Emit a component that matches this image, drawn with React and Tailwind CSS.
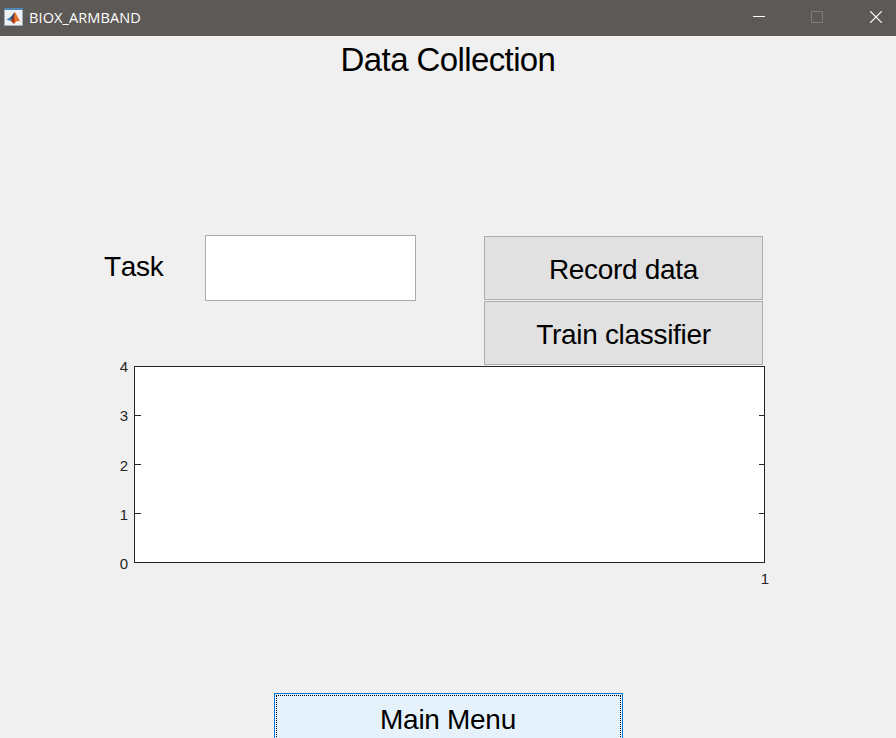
const TICKS = [4, 3, 2, 1, 0];

function MatlabIcon() {
  return (
    <svg width="19" height="19" viewBox="0 0 19 19" className="block">
      <defs>
        <linearGradient id="flame" x1="0" y1="0" x2="1" y2="0">
          <stop offset="0" stopColor="#8a2418" />
          <stop offset="0.3" stopColor="#a8301c" />
          <stop offset="0.5" stopColor="#e8762a" />
          <stop offset="0.65" stopColor="#e8762a" />
          <stop offset="1" stopColor="#c23a1a" />
        </linearGradient>
      </defs>
      <rect x="0" y="0" width="19" height="18" fill="#9fb0bf" />
      <rect x="0" y="0" width="19" height="2" fill="#4f86b4" />
      <rect x="1" y="2" width="17" height="15" fill="#f0f1f3" />
      <path d="M2.5 11.2 L6 9.4 L8 11.2 L6 13 Z" fill="#3f86bd" />
      <path d="M6 9.4 C8 8.8 8.6 5.6 10.6 4.2 L9.8 9.5 L8 12 Z" fill="#24486f" />
      <path d="M10.7 4 C12.3 5 14 10.5 16.4 13.6 C14.5 12.4 13.4 12.6 12 14 C10.8 15.2 9.8 15.8 9 15.6 C8.4 14 7.8 13.2 6.3 12.8 C8.8 11.8 9.8 7 10.7 4 Z" fill="url(#flame)" />
    </svg>
  );
}

function TitleBar() {
  return (
    <header className="flex h-9 shrink-0 items-start justify-between bg-[#5d5956] text-white">
      <div className="flex pl-1 pt-2">
        <MatlabIcon />
        <span className="ml-[6px] font-['Open_Sans','Noto_Sans',sans-serif] text-[14.5px] leading-[19px] tracking-[0.11px]">
          BIOX_ARMBAND
        </span>
      </div>
      <div className="flex pr-[14px] pt-[11px]">
        <svg width="129" height="12" viewBox="0 0 129 12" fill="none" className="block">
          <path d="M0 5.5H12" stroke="#fff" />
          <rect x="58.5" y="0.5" width="11" height="11" stroke="#7d7a78" />
          <path d="M117.3 0.3L128.7 11.7M128.7 0.3L117.3 11.7" stroke="#fff" strokeWidth="1.2" />
        </svg>
      </div>
    </header>
  );
}

function PushButton({ children }) {
  return (
    <button className="flex h-16 w-[279px] items-center justify-center border border-[#adadad] bg-[#e1e1e1] pt-[3px] text-[28px] leading-8 tracking-[-0.3px]">
      {children}
    </button>
  );
}

function Plot() {
  return (
    <section className="flex flex-col text-[15px] text-[#262626]">
      <div className="flex">
        <div className="-mt-2 flex h-[214px] w-[134px] flex-col justify-between pr-[6px] text-right">
          {TICKS.map((t) => (
            <span key={t} className="block leading-[17px]">{t}</span>
          ))}
        </div>
        <div className="flex h-[197px] w-[631px] justify-between border border-[#262626] bg-white">
          {["left", "right"].map((side) => (
            <div key={side} className="flex w-[5.5px] flex-col gap-12 pt-12">
              <i className="block h-px bg-[#262626]" />
              <i className="block h-px bg-[#262626]" />
              <i className="block h-px bg-[#262626]" />
            </div>
          ))}
        </div>
      </div>
      <div className="-mt-[2px] w-[769px] text-right leading-[17px]">1</div>
    </section>
  );
}

export default function App() {
  return (
    <div className="flex h-[738px] w-[896px] flex-col overflow-hidden bg-[#f0f0f0] font-['Liberation_Sans',Arial,sans-serif] text-black">
      <TitleBar />
      <h1 className="h-[199px] shrink-0 pt-[4px] text-center text-[33px] leading-[40px] tracking-[-0.6px]">Data Collection</h1>
      <div className="flex h-[131px] shrink-0">
        <label htmlFor="task" className="w-[205px] pl-[104px] pt-4 text-[28px] leading-8 tracking-[-0.3px] [font-kerning:none]">Task</label>
        <input id="task" className="h-[66px] w-[211px] border border-[#ababab] bg-white px-2 text-[28px] outline-none" />
        <div className="ml-[68px] flex flex-col gap-px pt-px">
          <PushButton>Record data</PushButton>
          <PushButton>Train classifier</PushButton>
        </div>
      </div>
      <Plot />
      <div className="mt-auto flex h-[45px] shrink-0 justify-center pr-[-1px]">
        <button className="h-[64px] w-[349px] border border-[#0078d7] bg-[#e5f1fb] p-px">
          <span className="block h-full border border-dotted border-black pt-[8px] text-[28px] leading-8 tracking-[-0.3px]">Main Menu</span>
        </button>
      </div>
    </div>
  );
}
